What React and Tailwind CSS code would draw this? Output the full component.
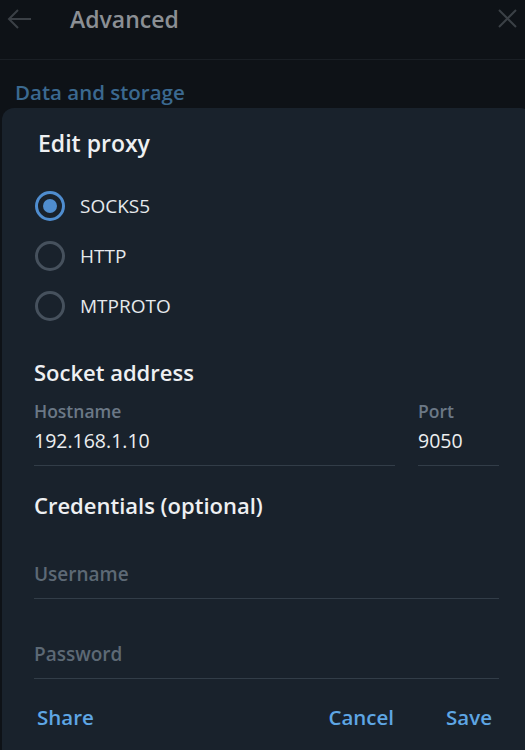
import { useState } from "react";

const FONT = { fontFamily: '"Open Sans", "Noto Sans", sans-serif' };

function Radio({ checked, label, onClick }) {
  return (
    <button onClick={onClick} className="flex h-[50px] items-center gap-[15px] pl-[1px] text-left">
      {checked ? (
        <span className="flex h-[30px] w-[30px] items-center justify-center rounded-full border-[3px] border-[#4f8dcf]">
          <span className="h-[14px] w-[14px] rounded-full bg-[#4f8dcf]" />
        </span>
      ) : (
        <span className="h-[30px] w-[30px] rounded-full border-[3px] border-[#46515d]" />
      )}
      <span className="text-[19px] leading-[28px] text-[#e6e9ec]">{label}</span>
    </button>
  );
}

function Field({ label, value, placeholder, className }) {
  return (
    <div className={className}>
      {label && <div className="mt-[12px] text-[17.5px] font-semibold leading-[24px] text-[#6b7886]">{label}</div>}
      <div
        className={
          "border-b border-[#323d48] pb-[10px] leading-[28px] " +
          (label ? "mt-[4px]" : "") +
          (value ? " text-[19.5px] text-[#eceef0]" : " text-[19px] font-semibold text-[#5d6975]")
        }
      >
        {value || placeholder}
      </div>
    </div>
  );
}

export default function App() {
  const [type, setType] = useState("SOCKS5");

  return (
    <div style={FONT} className="flex h-[750px] w-[525px] flex-col overflow-hidden bg-[#0e1217]">
      {/* settings header, dimmed behind the dialog */}
      <div className="relative flex h-[60px] shrink-0 items-start border-b border-[#1a1f25]">
        <svg className="absolute left-[7px] top-[8px]" width="26" height="22" viewBox="0 0 26 22" fill="none" stroke="#3b4046" strokeWidth="2">
          <path d="M2 11h22M11 2l-9 9 9 9" />
        </svg>
        <div className="ml-[70px] mt-[3px] text-[23px] font-semibold leading-[32px] text-[#8b8f94]">Advanced</div>
        <svg className="absolute right-[8px] top-[9px]" width="19" height="19" viewBox="0 0 19 19" fill="none" stroke="#3b4046" strokeWidth="2">
          <path d="M1 1l17 17M18 1L1 18" />
        </svg>
      </div>
      <div className="ml-[15px] mt-[18px] h-[30px] text-[20.5px] font-semibold leading-[28px] text-[#3b6990]">Data and storage</div>

      {/* dialog */}
      <div className="ml-[2px] flex w-[530px] flex-1 flex-col rounded-t-[12px] bg-[#19222c] pl-[32px] pr-[33px]">
        <div className="ml-[4px] mt-[19px] text-[23px] font-semibold leading-[32px] text-[#eef0f2]">Edit proxy</div>

        <div className="mt-[22px] flex flex-col">
          {["SOCKS5", "HTTP", "MTPROTO"].map((t) => (
            <Radio key={t} label={t} checked={type === t} onClick={() => setType(t)} />
          ))}
        </div>

        <div className="mt-[26px] text-[22px] font-semibold leading-[30px] text-[#eef0f2]">Socket address</div>
        <div className="flex gap-[23px]">
          <Field className="flex-1" label="Hostname" value="192.168.1.10" />
          <Field className="w-[81px]" label="Port" value="9050" />
        </div>

        <div className="mt-[24px] text-[22px] font-semibold leading-[30px] text-[#eef0f2]">Credentials (optional)</div>
        <Field className="mt-[40px]" placeholder="Username" />
        <Field className="mt-[41px]" placeholder="Password" />

        <div className="mt-[24px] flex items-center text-[20.5px] font-semibold leading-[28px] text-[#5ea6e4]">
          <button className="ml-[3px]">Share</button>
          <button className="ml-auto">Cancel</button>
          <button className="ml-[52px] mr-[7px]">Save</button>
        </div>
      </div>
    </div>
  );
}
